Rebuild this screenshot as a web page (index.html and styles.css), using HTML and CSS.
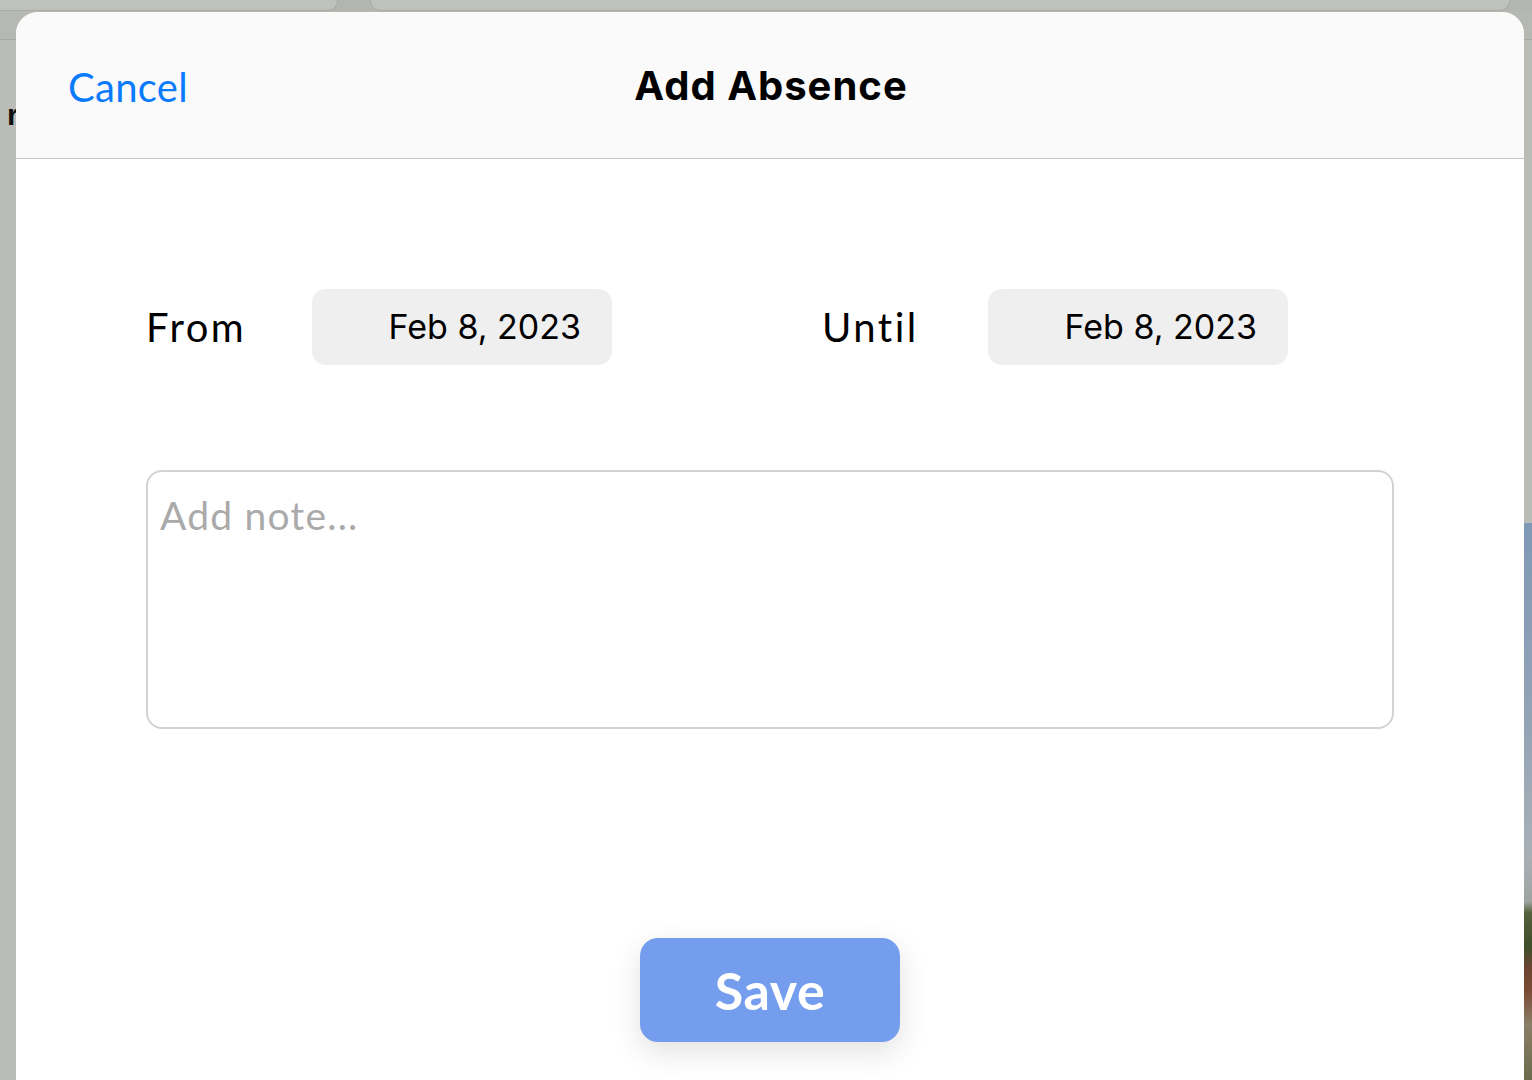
FILE: index.html
```html
<!DOCTYPE html>
<html lang="en">
<head>
<meta charset="utf-8">
<title>Add Absence</title>
<link rel="stylesheet" href="styles.css">
</head>
<body>
<div class="backdrop">
  <div class="tabs">
    <div class="tab tab-left"></div>
    <div class="tab tab-right"></div>
  </div>
  <div class="bg-bar"></div>
  <div class="bg-content">
    <span class="bg-letter">r</span>
  </div>
  <div class="bg-photo"></div>
</div>

<div class="modal">
  <header class="modal-header">
    <button class="cancel">Cancel</button>
    <h1 class="title">Add Absence</h1>
  </header>
  <main class="modal-body">
    <div class="dates">
      <div class="date-group">
        <span class="label">From</span>
        <div class="pill">Feb 8, 2023</div>
      </div>
      <div class="date-group">
        <span class="label">Until</span>
        <div class="pill">Feb 8, 2023</div>
      </div>
    </div>
    <textarea class="note" placeholder="Add note..."></textarea>
    <div class="actions">
      <button class="save">Save</button>
    </div>
  </main>
</div>
</body>
</html>
```

FILE: styles.css
```css
* { box-sizing: border-box; }

html, body {
  margin: 0;
  padding: 0;
  width: 1532px;
  height: 1080px;
  overflow: hidden;
  background: #babcb8;
  font-family: Lato, "Noto Sans", sans-serif;
}

.backdrop {
  position: relative;
  width: 1532px;
  height: 1080px;
}

.tabs {
  display: flex;
  height: 11px;
  gap: 32px;
  padding-right: 22px;
  background: #b3b5b1;
}

.tab {
  height: 11px;
  background: #bfc1bd;
  border-bottom: 1px solid #a9aba7;
  border-radius: 0 0 10px 10px;
}

.tab-left { width: 338px; border-radius: 0 0 10px 0; border-right: 1px solid #a9aba7; }
.tab-right { flex: 1; border-left: 1px solid #a9aba7; border-right: 1px solid #a9aba7; }

.bg-bar {
  height: 29px;
  background: #b6b8b4;
  border-bottom: 1px solid #a6a8a4;
}

.bg-content {
  padding: 58px 0 0 7px;
}

.bg-letter {
  font-family: "Liberation Sans", Arial, sans-serif;
  font-weight: 700;
  font-size: 30px;
  color: #111;
}

.bg-photo {
  position: absolute;
  right: 0;
  top: 523px;
  width: 8px;
  height: 557px;
  background: linear-gradient(180deg, #7f98b5 0%, #92a3b6 35%, #a8b0b6 60%, #9ea3a0 68%, #54603a 70%, #3f4f2a 76%, #6c4530 80%, #7a4b35 84%, #8a7f68 90%, #6b6a4c 100%);
}

.modal {
  position: absolute;
  left: 16px;
  top: 12px;
  width: 1508px;
  height: 1100px;
  background: #ffffff;
  border-radius: 22px 22px 0 0;
  overflow: hidden;
  display: flex;
  flex-direction: column;
}

.modal-header {
  height: 147px;
  flex: none;
  background: #fafafa;
  border-bottom: 1px solid #c6c6c6;
  display: flex;
  align-items: center;
  padding: 0 0 0 52px;
  position: relative;
}

.cancel {
  background: none;
  border: none;
  padding: 0;
  margin-top: 4px;
  font-family: Lato, "Noto Sans", sans-serif;
  font-size: 40px;
  letter-spacing: 0.3px;
  color: #0a7aff;
  cursor: pointer;
}

.title {
  position: absolute;
  left: 0;
  right: 0;
  top: 0;
  bottom: 0;
  margin: 0;
  display: flex;
  align-items: center;
  justify-content: center;
  padding-left: 2px;
  font-family: Inter, "Noto Sans", sans-serif;
  font-weight: 700;
  font-size: 40px;
  letter-spacing: 1px;
  color: #000;
  pointer-events: none;
}

.modal-body {
  flex: 1;
  padding: 130px 0 0 130px;
  display: flex;
  flex-direction: column;
}

.dates {
  display: flex;
  gap: 210px;
}

.date-group {
  display: flex;
  align-items: center;
  gap: 64px;
}

.label {
  font-family: Lato, "Noto Sans", sans-serif;
  font-size: 40px;
  letter-spacing: 2.5px;
  color: #000;
  width: 102px;
}

.pill {
  width: 300px;
  height: 76px;
  border-radius: 14px;
  background: #efefef;
  display: flex;
  align-items: center;
  justify-content: flex-end;
  padding: 0 31px 2px 0;
  font-family: Inter, "Noto Sans", sans-serif;
  font-size: 34px;
  color: #000;
}

.note {
  margin-top: 105px;
  width: 1248px;
  height: 259px;
  border: 2px solid #d3d3d3;
  border-radius: 16px;
  padding: 20px 12px;
  resize: none;
  font-family: Lato, "Noto Sans", sans-serif;
  font-size: 39px;
  letter-spacing: 1.2px;
  color: #000;
  outline: none;
  background: #fff;
}

.note::placeholder {
  color: #aaaaaa;
}

.actions {
  display: flex;
  justify-content: center;
  width: 1248px;
  margin-top: 209px;
}

.save {
  width: 260px;
  height: 104px;
  border: none;
  border-radius: 18px;
  background: #759ded;
  color: #ffffff;
  font-family: Lato, "Noto Sans", sans-serif;
  font-weight: 700;
  font-size: 52px;
  letter-spacing: 0.5px;
  box-shadow: 0 10px 30px rgba(0, 0, 0, 0.12);
  cursor: pointer;
}
```
